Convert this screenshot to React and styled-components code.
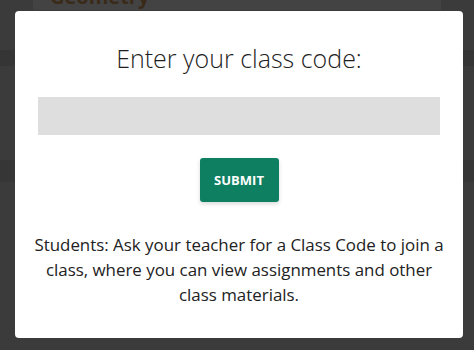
import React from "react";
import styled, { createGlobalStyle } from "styled-components";

const Global = createGlobalStyle`
  html, body { margin: 0; padding: 0; }
  body { font-family: "Open Sans", "Noto Sans", sans-serif; background: #3a3a3a; }
`;

const Screen = styled.div`
  position: relative;
  width: 474px;
  height: 350px;
  overflow: hidden;
  background: #3b3b3b;
`;

const BackPage = styled.div`
  display: flex;
  flex-direction: column;
  height: 100%;
`;

const BackCard = styled.div`
  margin: 0 33px;
  height: 10px;
  background: #434343;
  overflow: hidden;
  padding-left: 17px;
`;

const BackTitle = styled.div`
  font-weight: 700;
  font-size: 20px;
  line-height: 20px;
  margin-top: -13px;
  color: #3a2a18;
`;

const Band = styled.div`
  height: ${(p) => p.$h}px;
  margin-top: ${(p) => p.$top}px;
  background: ${(p) => p.$c};
`;

const Modal = styled.div`
  position: absolute;
  left: 15px;
  top: 11px;
  width: 448px;
  height: 327px;
  box-sizing: border-box;
  background: #fff;
  border-radius: 4px;
  display: flex;
  flex-direction: column;
  align-items: center;
  padding: 30px 0 0;
`;

const Title = styled.h2`
  margin: 0;
  font-size: 25px;
  line-height: 34px;
  font-weight: 300;
  color: #1e1e1e;
`;

const CodeInput = styled.input`
  margin-top: 22px;
  width: 402px;
  height: 38px;
  box-sizing: border-box;
  border: none;
  background: #dedede;
  outline: none;
`;

const SubmitButton = styled.button`
  margin-top: 23px;
  height: 44px;
  width: 79px;
  padding: 0;
  border: none;
  border-radius: 3px;
  background: #0f7f62;
  color: #fff;
  font-family: "Open Sans", sans-serif;
  font-weight: 700;
  font-size: 13px;
  box-shadow: 0 2px 4px rgba(0, 0, 0, 0.15);
  cursor: pointer;
`;

const Help = styled.p`
  margin: 30px 0 0;
  padding: 0 16px;
  text-align: center;
  font-size: 16.9px;
  line-height: 25px;
  color: #222;
`;

export default function App() {
  return (
    <>
      <Global />
      <Screen>
        <BackPage>
          <BackCard>
            <BackTitle>Geometry</BackTitle>
          </BackCard>
          <Band $top={40} $h={16} $c="#353535" />
          <Band $top={94} $h={22} $c="#363636" />
        </BackPage>
        <Modal>
          <Title>Enter your class code:</Title>
          <CodeInput type="text" aria-label="Class code" />
          <SubmitButton>SUBMIT</SubmitButton>
          <Help>
            Students: Ask your teacher for a Class Code to join a class, where
            you can view assignments and other class materials.
          </Help>
        </Modal>
      </Screen>
    </>
  );
}
